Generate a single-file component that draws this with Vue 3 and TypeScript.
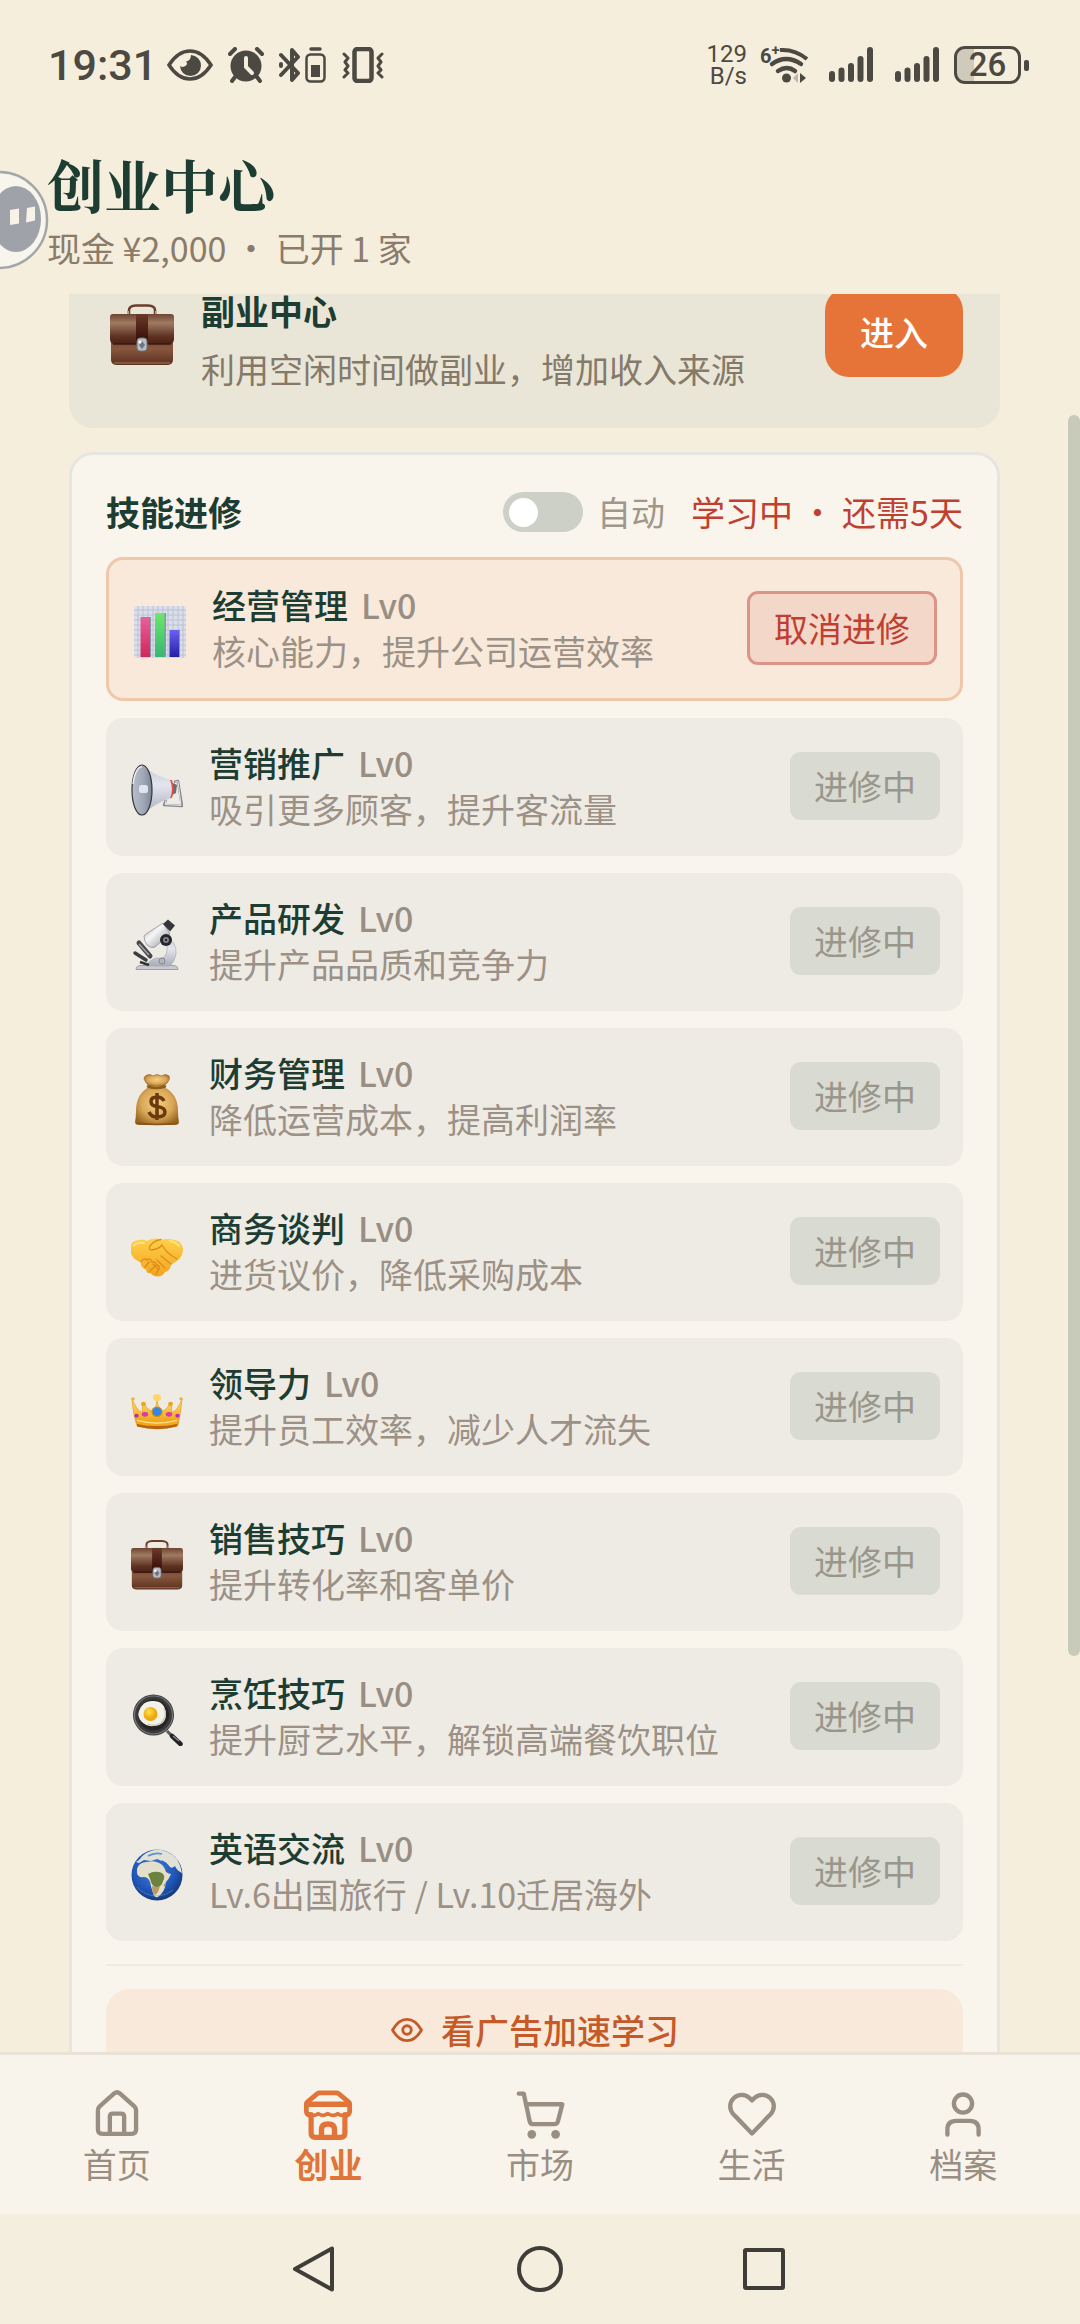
<script setup lang="ts">
import { computed, onMounted, ref } from 'vue'

interface Skill {
  icon: string
  name: string
  level: number
  desc: string
  active?: boolean
}

interface Tab {
  id: string
  label: string
}

const skills: Skill[] = [
  { icon: 'chart', name: '经营管理', level: 0, desc: '核心能力，提升公司运营效率', active: true },
  { icon: 'megaphone', name: '营销推广', level: 0, desc: '吸引更多顾客，提升客流量' },
  { icon: 'microscope', name: '产品研发', level: 0, desc: '提升产品品质和竞争力' },
  { icon: 'moneybag', name: '财务管理', level: 0, desc: '降低运营成本，提高利润率' },
  { icon: 'handshake', name: '商务谈判', level: 0, desc: '进货议价，降低采购成本' },
  { icon: 'crown', name: '领导力', level: 0, desc: '提升员工效率，减少人才流失' },
  { icon: 'briefcase', name: '销售技巧', level: 0, desc: '提升转化率和客单价' },
  { icon: 'pan', name: '烹饪技巧', level: 0, desc: '提升厨艺水平，解锁高端餐饮职位' },
  { icon: 'globe', name: '英语交流', level: 0, desc: 'Lv.6出国旅行 / Lv.10迁居海外' },
]

const tabs: Tab[] = [
  { id: 'home', label: '首页' },
  { id: 'shop', label: '创业' },
  { id: 'cart', label: '市场' },
  { id: 'heart', label: '生活' },
  { id: 'user', label: '档案' },
]
const activeTab = ref('shop')
const autoStudy = ref(false)

const scroller = ref<HTMLElement | null>(null)
const metrics = ref({ top: 0, view: 1, total: 1 })

function measure(): void {
  const el = scroller.value
  if (!el) return
  metrics.value = { top: el.scrollTop, view: el.clientHeight, total: el.scrollHeight }
}

const thumbStyle = computed(() => ({
  top: `${(metrics.value.top / metrics.value.total) * 100}%`,
  height: `${(metrics.value.view / metrics.value.total) * 100}%`,
}))

onMounted(() => {
  if (scroller.value) scroller.value.scrollTop = 171
  measure()
})
</script>

<template>
  <svg class="sprite" width="0" height="0" aria-hidden="true">
    <defs>
      <linearGradient id="leather" x1="0" y1="0" x2="0" y2="1">
        <stop offset="0" stop-color="#6d4532" /><stop offset=".3" stop-color="#a07a62" />
        <stop offset=".75" stop-color="#5e3222" /><stop offset="1" stop-color="#4a2114" />
      </linearGradient>
      <linearGradient id="leather2" x1="0" y1="0" x2="0" y2="1">
        <stop offset="0" stop-color="#6b3d2a" /><stop offset=".5" stop-color="#87583f" /><stop offset="1" stop-color="#5c301e" />
      </linearGradient>
      <linearGradient id="strap" x1="0" y1="0" x2="0" y2="1">
        <stop offset="0" stop-color="#6a3a2a" /><stop offset="1" stop-color="#350b06" />
      </linearGradient>
      <linearGradient id="barR" x1="0" y1="0" x2="0" y2="1"><stop offset="0" stop-color="#e8609a" /><stop offset="1" stop-color="#d0285a" /></linearGradient>
      <linearGradient id="barG" x1="0" y1="0" x2="0" y2="1"><stop offset="0" stop-color="#6ee86c" /><stop offset="1" stop-color="#36b673" /></linearGradient>
      <linearGradient id="barB" x1="0" y1="0" x2="0" y2="1"><stop offset="0" stop-color="#6a62f0" /><stop offset="1" stop-color="#241fa8" /></linearGradient>
      <linearGradient id="horn" x1="0" y1="0" x2="0" y2="1"><stop offset="0" stop-color="#c3c7d3" /><stop offset=".4" stop-color="#e3e6ef" /><stop offset="1" stop-color="#a9adba" /></linearGradient>
      <linearGradient id="mouth" x1="0" y1="0" x2="1" y2="0"><stop offset="0" stop-color="#b9c0cc" /><stop offset=".6" stop-color="#9ea6b5" /><stop offset="1" stop-color="#7d8594" /></linearGradient>
      <linearGradient id="steel" x1="0" y1="0" x2="1" y2="1"><stop offset="0" stop-color="#9ea0a6" /><stop offset=".4" stop-color="#f6f6f8" /><stop offset="1" stop-color="#8b8d93" /></linearGradient>
      <radialGradient id="sack" cx=".5" cy=".45" r=".6"><stop offset="0" stop-color="#f6cf86" /><stop offset=".6" stop-color="#d9a757" /><stop offset="1" stop-color="#9a6722" /></radialGradient>
      <linearGradient id="hand" x1="0" y1="0" x2="0" y2="1"><stop offset="0" stop-color="#ffd04a" /><stop offset="1" stop-color="#f2a421" /></linearGradient>
      <linearGradient id="gold" x1="0" y1="0" x2="0" y2="1"><stop offset="0" stop-color="#ffda72" /><stop offset=".6" stop-color="#f7b62e" /><stop offset="1" stop-color="#d98716" /></linearGradient>
      <radialGradient id="yolk" cx=".4" cy=".35"><stop offset="0" stop-color="#ffe14a" /><stop offset="1" stop-color="#eda60c" /></radialGradient>
      <radialGradient id="sea" cx=".45" cy=".4" r=".6"><stop offset="0" stop-color="#3f7fdc" /><stop offset=".7" stop-color="#1f55b8" /><stop offset="1" stop-color="#173a7e" /></radialGradient>
    </defs>

    <symbol id="i-briefcase" viewBox="0 0 64 62">
      <path d="M19 11V6q0-4 7-4.500h12q7 .5 7 4.500v5" fill="none" stroke="#6b3d2c" stroke-width="2.500" />
      <path d="M18 11V7M46 11V7" stroke="#b8a59a" stroke-width="2" />
      <rect x="1" y="28" width="62" height="33" rx="5" fill="url(#leather2)" />
      <path d="M3 10h58q3 0 3 3v22q0 5-5 5H5q-5 0-5-5V13q0-3 3-3z" fill="url(#leather)" />
      <rect x="26" y="10" width="12" height="28" fill="url(#strap)" />
      <rect x="27" y="34" width="10" height="13" rx="3" fill="#b9bcc4" stroke="#71737a" />
      <path d="M32 37l3 4-3 4-3-4z" fill="#70747e" /><circle cx="30" cy="38" r="1.500" fill="#fff" />
      <path d="M3 40h23M38 40h23" stroke="#3d190f" stroke-width="1.500" />
      <path d="M4 59h56" stroke="#a6775a" stroke-width="1" />
    </symbol>

    <symbol id="i-chart" viewBox="0 0 52 52">
      <rect width="52" height="52" rx="4" fill="#dcdfea" />
      <path d="M0 4h52M0 9h52M0 14h52M0 19h52M0 24h52M0 29h52M0 34h52M0 39h52M0 44h52M0 49h52M4 0v52M9 0v52M14 0v52M19 0v52M24 0v52M29 0v52M34 0v52M39 0v52M44 0v52M49 0v52" stroke="#bac1d4" />
      <path d="M16 11v40M31 7v44M45 24v27" stroke="#8e94a8" stroke-width="2" />
      <rect x="6.500" y="11" width="9.500" height="40" fill="url(#barR)" />
      <rect x="21" y="7" width="9.500" height="44" fill="url(#barG)" />
      <rect x="35.500" y="24" width="9.500" height="27" fill="url(#barB)" />
    </symbol>

    <symbol id="i-megaphone" viewBox="0 0 52 52">
      <path d="M43 18l4-1 4 25-18-1 2-5" fill="none" stroke="#85878d" stroke-width="2.500" stroke-linejoin="round" />
      <path d="M44 18l3-.5 3 24-16-1 1-4" fill="none" stroke="#e6e7eb" stroke-width="1" />
      <path d="M42 19l4 2-1 8-4 2z" fill="#6a6c72" />
      <path d="M11 1Q22 11 40 16q4 9 0 18Q24 39 11 51z" fill="url(#horn)" />
      <path d="M39 15.700q4 9.500 0 18.600l2-.6q3.500-8.700 0-17.400z" fill="#e64a44" />
      <ellipse cx="11" cy="26" rx="10" ry="25" fill="url(#mouth)" stroke="#34363c" stroke-width="1.200" />
      <path d="M2 20Q4 4 11 2.500" fill="none" stroke="#e9ecf1" stroke-width="1.500" />
      <rect x="8" y="21" width="9" height="8" rx="2.500" fill="#e0e4ee" />
    </symbol>

    <symbol id="i-microscope" viewBox="0 0 52 52">
      <path d="M5 50.500q0-4 5-4h32q5 0 5 4z" fill="#c9cacf" stroke="#8c8e94" stroke-width=".8" />
      <path d="M35 18q11 5 10 17-1 7-6 12H15q3-6 10-8l7 0q5-4 4-12-1-5-4-6z" fill="url(#horn)" stroke="#a5a6ac" stroke-width=".6" />
      <path d="M8 24l11 13" stroke="#45474c" stroke-width="5" stroke-linecap="round" />
      <path d="M8 25l10 11" stroke="#a4a6ab" stroke-width="1.500" />
      <path d="M4 34l11 7" stroke="#3c3e42" stroke-width="3.500" stroke-linecap="round" />
      <path d="M9 43l9 3" stroke="#2f3135" stroke-width="2.500" />
      <path d="M15 15L32 4l7 11-15 13q-4 2-8-2-3-5-3-9z" fill="url(#steel)" stroke="#77797f" stroke-width=".6" />
      <path d="M32 5l5-4.500 7 6-5 6z" fill="#34363a" />
      <circle cx="35" cy="21" r="6" fill="#24262a" /><circle cx="35" cy="21" r="3" fill="#84868c" /><circle cx="35" cy="21" r="1.200" fill="#24262a" />
      <circle cx="31" cy="42" r="3" fill="#b4b6bc" stroke="#85878d" />
    </symbol>

    <symbol id="i-moneybag" viewBox="0 0 52 52">
      <path d="M18 12Q10 4 15 1.500q4-2 7 .5 4-3 8 0 5-3 8 0 2 4-5 10z" fill="url(#sack)" stroke="#a2712c" stroke-width=".8" />
      <path d="M18 13q8-3 15 0Q47 20 47 37q0 6 1 11 0 3-4 3H8q-4 0-4-3 1-5 1-11Q5 20 18 13z" fill="url(#sack)" />
      <path d="M17 12.500q8 3 17 0" fill="none" stroke="#8d5c1b" stroke-width="2.500" stroke-linecap="round" />
      <path d="M5 49q21 3 42 0" fill="none" stroke="#86541a" stroke-width="1.500" />
      <path d="M33 27q-2-4-7-4-6 0-6 4.500t6 5q8 1 8 5.500 0 5-8 5-6 0-8-5M26 19v27" fill="none" stroke="#6a3a0c" stroke-width="3.500" />
    </symbol>

    <symbol id="i-handshake" viewBox="0 0 52 52">
      <path d="M0 18q0-5 4-6 7-3 12 0 7-4 14-1.500Q40 9 47 12q4 2 5 8 0 7-5 11l-7 5q-1 6-6 7-2 4-7 4.500-5 0-7-3-5 0-5-4-6-2-5-7-8-3-10-9z" fill="url(#hand)" />
      <path d="M30 10.500q-7 1-11 6.500-2 4 2 4 7-1 10-5 4 8 15 14M30 27l10 8M26 31l8 8M22 35l5 5" fill="none" stroke="#dc8c1a" stroke-width="1.300" stroke-linecap="round" />
      <path d="M10 33q3-5 6-2 3-3 5 2 4-1 4 3 4 0 3 4l-3 5M14 38l4-5M19 42l5-5" fill="none" stroke="#dd8a16" stroke-width="1.300" stroke-linecap="round" />
      <path d="M3 16q5-3 10-2M39 12q6 1 9 5" fill="none" stroke="#ffe284" stroke-width="2" stroke-linecap="round" />
    </symbol>

    <symbol id="i-crown" viewBox="0 0 52 52">
      <g transform="translate(0 6) scale(1 .87)">
        <path d="M1 10q5 14 10 16l1-12q6 11 10 10 4-4 4-16 0 12 5 16 4 0 9-10l1 12q6-3 10-16-1 16-4 31-20 6-41 0Q2 28 1 10z" fill="url(#gold)" stroke="#e39b20" stroke-width=".7" />
        <path d="M6 32q20 6 40 0v8q-20 5-40 0z" fill="#f5a81d" />
        <path d="M6 39q20 5 40 0v3q-20 6-40 0z" fill="#b9630c" />
        <path d="M6 35q20 6 40 0" fill="none" stroke="#ffe288" stroke-width="1.500" />
        <circle cx="26" cy="9" r="4" fill="#ffd566" /><circle cx="12.500" cy="16" r="2.500" fill="#eda520" /><circle cx="39.500" cy="16" r="2.500" fill="#eda520" />
        <circle cx="2" cy="10" r="1.800" fill="#f2b23a" /><circle cx="50" cy="10" r="1.800" fill="#f2b23a" />
        <ellipse cx="26" cy="25" rx="5" ry="5.500" fill="#3487e0" stroke="#d58c15" stroke-width="1.200" />
        <ellipse cx="14" cy="28" rx="3.200" ry="2.800" fill="#d13cae" /><ellipse cx="38" cy="28" rx="3.200" ry="2.800" fill="#d13cae" />
        <circle cx="5.500" cy="29.500" r="2.200" fill="#b52fb0" /><circle cx="46.500" cy="29.500" r="2.200" fill="#b52fb0" />
      </g>
    </symbol>

    <symbol id="i-pan" viewBox="0 0 52 52">
      <path d="M36 37l6 6" stroke="#55575b" stroke-width="3" />
      <path d="M41 42l8.500 8" stroke="#222326" stroke-width="4.500" stroke-linecap="round" />
      <path d="M42 42l6 5" stroke="#8a8c90" stroke-width="1.200" />
      <circle cx="22.500" cy="21" r="20.500" fill="#3a3a3b" /><circle cx="22.500" cy="21" r="19" fill="none" stroke="#77787a" stroke-width="1.200" />
      <circle cx="22.500" cy="21" r="15.500" fill="#252526" />
      <path d="M8 17q4-11 14-10 12 0 13 13 0 11-12 12-8 1-13-5-4-5-2-10z" fill="#f4f1e8" />
      <path d="M33 14q4 8-3 15-6 4-13 1" fill="none" stroke="#c9c3ad" stroke-width="1.200" />
      <circle cx="19.500" cy="20" r="7" fill="url(#yolk)" />
    </symbol>

    <symbol id="i-globe" viewBox="0 0 52 52">
      <circle cx="26" cy="26" r="25.500" fill="url(#sea)" />
      <path d="M8 11Q14 2 26 .5 38 1 46 10q4 7 5 14-5-2-7-7-3 3-5 1-4-6-8-6l-5-2-6 2-7-1-5 3-3-1z" fill="#e2e1d6" />
      <path d="M6 20q2-7 10-7 7-2 12 1 5 2 7 9 3 2 5 2-2 5-5 8-1 10-8 15-4 1-5-4-2-6-3-11-2-5-6-5-6 1-7-4z" fill="#e4dfca" />
      <path d="M17 25q7-4 14-1 4 3 1 8-1 5-5 6-5 1-7-5-1-4-3-8z" fill="#6d8240" />
      <path d="M21 37q5 2 8 0-2 8-5 9-3-2-3-9z" fill="#b99a63" />
      <path d="M17 7q7-4 14-2" fill="none" stroke="#5a93d6" stroke-width="1.800" />
      <path d="M31 12q4 4 6 9" fill="none" stroke="#2f68bd" stroke-width="1.800" />
      <path d="M33 38q2-2 2-4-3 1-2 4z" fill="#9f8f57" />
      <path d="M6 38q8 9 20 9 9 0 16-6" fill="none" stroke="#7b9cd0" stroke-width="1" opacity=".5" />
    </symbol>

    <symbol id="t-home" viewBox="0 0 24 24">
      <path d="M3.200 10.200q0-1 .8-1.700L10.700 2.500q1.300-1.100 2.600 0L20 8.500q.8.700.8 1.700v9q0 2-2 2H5.200q-2 0-2-2z" />
      <path d="M8.700 21v-7.800q0-1.400 1.400-1.400h3.800q1.400 0 1.400 1.400V21" />
    </symbol>
    <symbol id="t-shop" viewBox="0 0 24 24">
      <path d="M3.400 12.600q-1.400-.6-1.400-2V7.400q0-.6.500-1L7.100 2.600q.4-.3 1-.3h7.800q.6 0 1 .3l4.600 3.800q.5.400.5 1v3.200q0 1.400-1.400 2" stroke-width="2.200" />
      <path d="M2.400 7.500h19.200" stroke-width="2.500" />
      <path d="M4.200 12.300v8.500q0 2 2 2h11.600q2 0 2-2v-8.500" stroke-width="2.400" />
      <path d="M3.200 12q1 .6 2.200.6 1.300 0 2.100-.8 1 .8 2.200.8t2.300-.8q1 .8 2.300.8t2.200-.8q.9.800 2.200.8 1.200 0 2.300-.6" stroke-width="1.700" />
      <path d="M9 22.500v-3.300q0-2.600 3-2.600t3 2.600v3.300" stroke-width="2.500" />
    </symbol>
    <symbol id="t-cart" viewBox="0 0 24 24">
      <path d="M2.200 2.600h2.300l2.700 12.600q.3 1.500 1.800 1.500h9.600q1.400 0 1.700-1.400l2-7.800H5.600" />
      <circle cx="8.200" cy="21.400" r="2" fill="currentColor" stroke="none" />
      <circle cx="19.200" cy="21.400" r="2" fill="currentColor" stroke="none" />
    </symbol>
    <symbol id="t-heart" viewBox="0 0 24 24">
      <path d="M20.500 4.700a5.300 5.300 0 0 0-7.500 0l-1 1-1-1a5.300 5.300 0 0 0-7.500 7.500l1 1L12 21l7.500-7.800 1-1a5.300 5.300 0 0 0 0-7.500z" />
    </symbol>
    <symbol id="t-user" viewBox="0 0 24 24">
      <circle cx="12" cy="7.200" r="4.200" />
      <path d="M4.800 21.500v-2.300q0-4 4-4h6.400q4 0 4 4v2.300" />
    </symbol>
    <symbol id="s-signal" viewBox="0 0 44 36">
      <rect x="0" y="24" width="6" height="11" rx="3" /><rect x="9.500" y="20.500" width="6" height="14.500" rx="3" />
      <rect x="19" y="16" width="6" height="19" rx="3" /><rect x="28.500" y="9" width="6" height="26" rx="3" />
      <rect x="38" y="0" width="6" height="35" rx="3" />
    </symbol>
  </svg>

  <div class="phone" lang="zh-CN">
    <div class="status">
      <div class="status-left">
        <span class="clock">19:31</span>
        <div class="status-icons">
          <svg width="46" height="36" viewBox="0 0 46 36">
            <path d="M2 18Q11 4 23 4t21 14Q35 32 23 32T2 18z" fill="none" stroke="currentColor" stroke-width="3.500" />
            <path d="M24 8a10.500 10.500 0 1 1-11 11q3 2 6-.5 2-2 0-4 5-1 5-6.500z" fill="currentColor" />
          </svg>
          <svg width="36" height="36" viewBox="0 0 36 36">
            <circle cx="18" cy="19" r="15.500" fill="currentColor" />
            <path d="M2 7l5-5M34 7l-5-5" stroke="currentColor" stroke-width="4" stroke-linecap="round" />
            <path d="M7 30l-3 4M29 30l3 4" stroke="currentColor" stroke-width="4" stroke-linecap="round" />
            <path d="M18 11v9l6 6" fill="none" stroke="#f5eedd" stroke-width="4" stroke-linecap="round" />
          </svg>
          <svg width="48" height="36" viewBox="0 0 48 36">
            <path d="M2 8l17 18-6 7V3l6 7L2 28M2 17v2" fill="none" stroke="currentColor" stroke-width="4" stroke-linejoin="round" stroke-linecap="round" />
            <path d="M32 2h9" stroke="currentColor" stroke-width="3.500" stroke-linecap="round" />
            <rect x="27.500" y="7.500" width="18" height="27" rx="4" fill="none" stroke="currentColor" stroke-width="2.500" />
            <rect x="32" y="18" width="9" height="12" fill="currentColor" />
          </svg>
          <svg width="42" height="36" viewBox="0 0 42 36">
            <rect x="12.500" y="2" width="17" height="32" rx="3" fill="none" stroke="currentColor" stroke-width="4.500" />
            <path d="M2 7l4 4-3 4 3 4-3 4 3 3-4 4M40 7l-4 4 3 4-3 4 3 4-3 3 4 4" fill="none" stroke="currentColor" stroke-width="3" stroke-linejoin="round" stroke-linecap="round" />
          </svg>
        </div>
      </div>
      <div class="status-right">
        <span class="speed"><span>129</span><span>B/s</span></span>
        <span class="wifi">
          <svg width="50" height="38" viewBox="0 0 50 38">
            <path d="M20 4q15-1 27 9" fill="none" stroke="currentColor" stroke-width="4" />
            <path d="M12 18q14-10 29 0M18 25q9-6 17 0" fill="none" stroke="currentColor" stroke-width="4.500" stroke-linecap="round" />
            <circle cx="26.500" cy="32" r="4.500" fill="currentColor" />
            <path d="M38 27v10l-5-5z" fill="#bdb8aa" /><path d="M40 27v10l6-5z" fill="currentColor" />
          </svg>
          <b class="wifi-gen">6<sup>+</sup></b>
        </span>
        <svg class="signal" width="44" height="36"><use href="#s-signal" /></svg>
        <svg class="signal" width="44" height="36"><use href="#s-signal" /></svg>
        <span class="battery"><span class="battery-body">26</span><i class="battery-nub"></i></span>
      </div>
    </div>

    <svg class="assist" width="49" height="100" viewBox="0 0 49 100" aria-hidden="true">
      <circle cx="-1" cy="50" r="48" fill="#f8f5ec" stroke="#a4a7a9" stroke-width="2.500" />
      <ellipse cx="16" cy="49" rx="25" ry="33" fill="#9fa3a9" />
      <path d="M10 40l9-1.500v15L10 55zM27 38l8-1.500v14L26 52.500z" fill="#f7f3e9" />
    </svg>

    <header class="head">
      <h1>创业中心</h1>
      <p>现金 ¥2,000 ・ 已开 1 家</p>
    </header>

    <div class="body">
      <main ref="scroller" class="scroller" @scroll="measure">
        <section class="side-job">
          <svg class="side-icon" width="64" height="62"><use href="#i-briefcase" /></svg>
          <div class="side-text">
            <h2>副业中心</h2>
            <p>利用空闲时间做副业，增加收入来源</p>
          </div>
          <button type="button" class="enter">进入</button>
        </section>

        <section class="panel">
          <div class="panel-head">
            <h2>技能进修</h2>
            <input id="auto-study" v-model="autoStudy" class="switch" type="checkbox" role="switch" />
            <label for="auto-study">自动</label>
            <span class="progress">学习中 ・ 还需5天</span>
          </div>

          <ul class="skills">
            <li v-for="s in skills" :key="s.name" class="skill" :class="{ active: s.active }">
              <span class="skill-icon"><svg width="52" height="52"><use :href="`#i-${s.icon}`" /></svg></span>
              <div class="skill-text">
                <h3>{{ s.name }}<span>Lv{{ s.level }}</span></h3>
                <p>{{ s.desc }}</p>
              </div>
              <button v-if="s.active" type="button" class="cancel">取消进修</button>
              <button v-else type="button" class="busy" disabled>进修中</button>
            </li>
          </ul>

          <hr />
          <button type="button" class="ad">
            <svg width="34" height="34" viewBox="0 0 24 24" fill="none" stroke="currentColor" stroke-width="2">
              <path d="M1.800 12Q6 4.500 12 4.500T22.200 12Q18 19.500 12 19.500T1.800 12z" stroke-linejoin="round" />
              <circle cx="12" cy="12" r="3" />
            </svg>
            看广告加速学习
          </button>
        </section>
      </main>
      <div class="track"><div class="thumb" :style="thumbStyle"></div></div>
    </div>

    <nav class="tabs">
      <button
        v-for="t in tabs"
        :key="t.id"
        type="button"
        class="tab"
        :class="{ on: t.id === activeTab }"
        @click="activeTab = t.id"
      >
        <svg width="52" height="52"><use :href="`#t-${t.id}`" /></svg>
        {{ t.label }}
      </button>
    </nav>

    <div class="sysnav">
      <button type="button" aria-label="返回">
        <svg width="48" height="48" viewBox="0 0 48 48"><path d="M40 3.500v41L3 24z" /></svg>
      </button>
      <button type="button" aria-label="主屏幕">
        <svg width="48" height="48" viewBox="0 0 48 48"><circle cx="24" cy="24" r="21" /></svg>
      </button>
      <button type="button" aria-label="最近任务">
        <svg width="48" height="48" viewBox="0 0 48 48"><rect x="5" y="5" width="38" height="38" rx="1" /></svg>
      </button>
    </div>
  </div>
</template>

<style>
body {
  background: #f5eedd;
}
</style>

<style scoped>
* {
  box-sizing: border-box;
}
h1, h2, h3, p, ul {
  margin: 0;
  padding: 0;
}
button {
  border: 0;
  padding: 0;
  background: none;
  font: inherit;
  color: inherit;
  white-space: nowrap;
}
svg {
  display: block;
  flex: none;
}
.sprite {
  position: absolute;
}
.phone {
  position: relative;
  display: flex;
  flex-direction: column;
  height: 100vh;
  overflow: hidden;
  background: #f5eedd;
  color: #1d3d33;
  font: 400 34px/46px "Noto Sans CJK SC", sans-serif;
}

.status {
  display: flex;
  justify-content: space-between;
  align-items: center;
  height: 130px;
  padding: 0 51px 0 48px;
  color: #4c4942;
  font-family: Roboto, sans-serif;
}
.status-left, .status-right, .status-icons {
  display: flex;
  align-items: center;
}
.status-left {
  gap: 10px;
}
.status-icons {
  gap: 15px;
}
.clock {
  font-size: 43px;
  font-weight: 500;
}
.status-right {
  gap: 22px;
}
.speed {
  display: flex;
  flex-direction: column;
  font-size: 24px;
  line-height: 22px;
  text-align: right;
}
.wifi {
  position: relative;
  margin: 0 -3px 0 -9px;
}
.wifi-gen {
  position: absolute;
  top: 0;
  left: 0;
  font-size: 20px;
  line-height: 20px;
}
.wifi-gen sup {
  font-size: 15px;
  line-height: 0;
}
.signal {
  fill: currentColor;
}
.battery {
  display: flex;
  align-items: center;
  gap: 3px;
  margin-left: -7px;
}
.battery-body {
  width: 67px;
  border: 3px solid currentColor;
  border-radius: 11px;
  background: linear-gradient(90deg, #d0cabc 28%, transparent 28%);
  font-size: 33px;
  font-weight: 500;
  line-height: 32px;
  text-align: center;
}
.battery-nub {
  width: 5px;
  height: 11px;
  border-radius: 2px;
  background: currentColor;
}

.assist {
  position: absolute;
  left: 0;
  top: 170px;
}

.head {
  padding: 12px 47px 22px;
}
.head h1 {
  font: 700 57px/82px "Noto Serif CJK SC", "Source Han Serif SC", "Noto Sans CJK SC", serif;
}
.head p {
  line-height: 48px;
  color: #8b7b6b;
}

.body {
  display: flex;
  flex: 1;
  min-height: 0;
}
.scroller {
  flex: 1;
  min-width: 0;
  overflow-y: auto;
  scrollbar-width: none;
  padding: 112px 68px 504px 69px;
}
.track {
  position: relative;
  width: 12px;
}
.thumb {
  position: absolute;
  left: 0;
  right: 0;
  border-radius: 6px;
  background: #c8cbba;
}

.side-job {
  display: flex;
  align-items: center;
  height: 193px;
  padding: 0 37px;
  border-radius: 24px;
  background: #e9e6d7;
}
.side-icon {
  margin: 6px 27px 0 4px;
}
.side-text {
  flex: 1;
  padding-top: 16px;
}
.side-text h2, .panel-head h2 {
  font-size: 34px;
  font-weight: 700;
}
.side-text p {
  margin-top: 12px;
  color: #85796a;
}
.enter {
  padding: 22px 35px;
  border-radius: 24px;
  background: #e67439;
  color: #fff;
  font-weight: 500;
}

.panel {
  margin-top: 24px;
  padding: 34px;
  border: 3px solid #e6e5e1;
  border-radius: 24px;
  background: #faf5ec;
}
.panel-head {
  display: flex;
  align-items: center;
  margin-bottom: 22px;
}
.panel-head h2 {
  margin-right: auto;
}
.panel-head label {
  margin: 0 26px 0 14px;
  color: #a0978b;
}
.switch {
  appearance: none;
  display: flex;
  align-items: center;
  width: 80px;
  height: 40px;
  margin: 0;
  padding: 0 6px;
  border-radius: 20px;
  background: #ccd0c7;
}
.switch::before {
  content: "";
  width: 29px;
  height: 29px;
  border-radius: 50%;
  background: #fff;
}
.switch:checked {
  justify-content: flex-end;
  background: #e67439;
}
.progress {
  color: #bf4030;
}

.skills {
  display: flex;
  flex-direction: column;
  gap: 17px;
  list-style: none;
}
.skill {
  display: flex;
  align-items: center;
  padding: 22px 23px 24px;
  border-radius: 17px;
  background: #eeebe4;
}
.skill.active {
  border: 3px solid #f0c7ab;
  background: #f8e9da;
}
.skill-icon {
  width: 80px;
  padding: 8px 0 0 2px;
}
.skill-text {
  flex: 1;
}
.skill-text h3 {
  font-size: 34px;
  font-weight: 500;
}
.skill-text h3 span {
  margin-left: 13px;
  color: #998e83;
}
.skill-text p {
  color: #9c9187;
}
.busy, .cancel {
  padding: 11px 24px;
  border-radius: 11px;
}
.busy {
  background: #d9dad1;
  color: #99968b;
}
.cancel {
  border: 3px solid #da9488;
  background: #f3d7c9;
  color: #bf4030;
}
hr {
  height: 2px;
  margin: 23px 0;
  border: 0;
  background: #efebe3;
}
.ad {
  display: flex;
  justify-content: center;
  align-items: center;
  gap: 17px;
  width: 100%;
  padding: 18px;
  border-radius: 24px;
  background: #f8e9da;
  color: #c55a28;
  font-weight: 500;
}

.tabs {
  display: flex;
  padding: 33px 11px 27px;
  border-top: 3px solid #e9e2d6;
  background: #f9f4eb;
}
.tab {
  flex: 1;
  display: flex;
  flex-direction: column;
  align-items: center;
  gap: 1px;
  color: #998e82;
}
.tab svg {
  fill: none;
  stroke: currentColor;
  stroke-width: 2;
  stroke-linecap: round;
  stroke-linejoin: round;
}
.tab.on {
  color: #e07439;
  font-weight: 700;
}

.sysnav {
  display: flex;
  justify-content: center;
  align-items: center;
  gap: 176px;
  height: 110px;
  background: #f4eede;
}
.sysnav svg {
  fill: none;
  stroke: #3e3d38;
  stroke-width: 4;
  stroke-linejoin: round;
}
</style>
